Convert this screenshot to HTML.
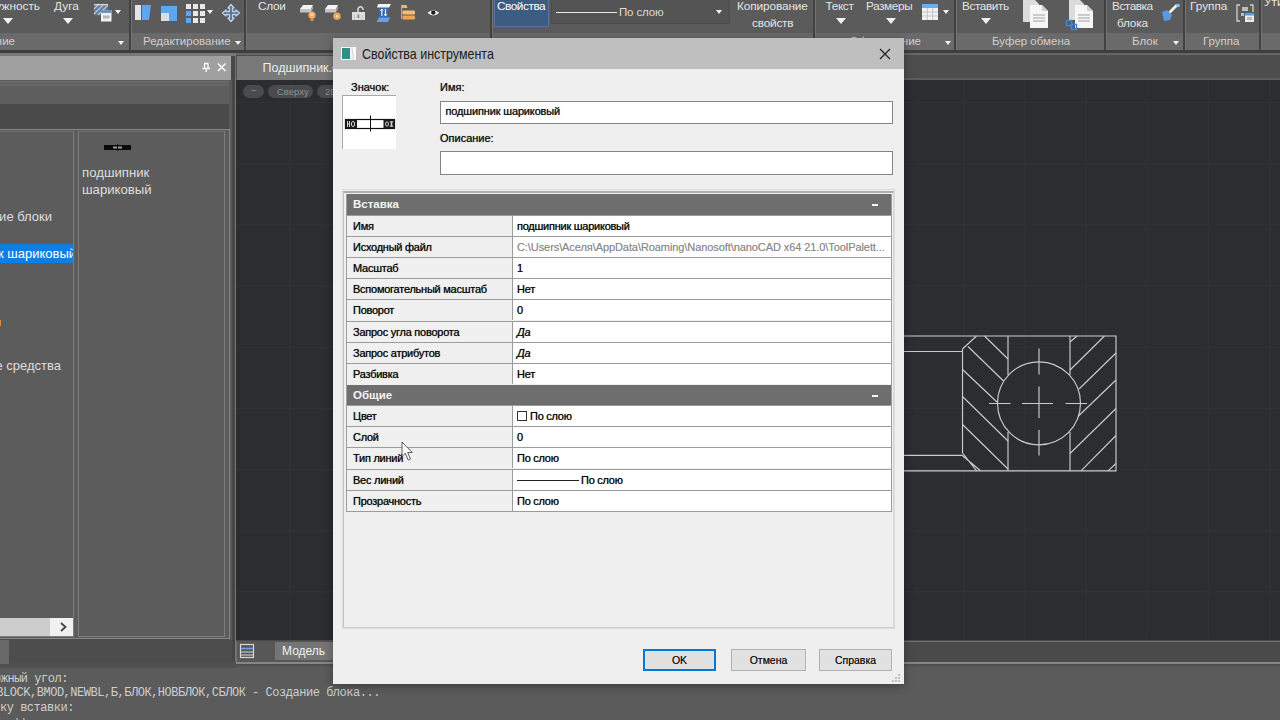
<!DOCTYPE html>
<html lang="ru">
<head>
<meta charset="utf-8">
<title>Свойства инструмента</title>
<style>
*{box-sizing:border-box;margin:0;padding:0}
html,body{width:1280px;height:720px;overflow:hidden;background:#4b4b4b;font-family:"Liberation Sans",sans-serif;}
#root{position:relative;width:1280px;height:720px;overflow:hidden;background:#4b4b4b}
.a{position:absolute}
.t{position:absolute;white-space:nowrap;line-height:1;}
/* ribbon */
#ribbon{left:0;top:0;width:1280px;height:50px;background:#5b5b5b}
#ribtitles{left:0;top:33px;width:1280px;height:17px;background:#6a6a6a}
.rt{font-size:11.800px;color:#e4e4e4;top:1px}
.rp{font-size:11.500px;color:#cfcfcf;top:36px}
.sep{position:absolute;top:0;width:3px;height:50px;background:#424242;border-right:1px solid #727272}
.tri{position:absolute;width:0;height:0;border-left:5px solid transparent;border-right:5px solid transparent;border-top:6px solid #f2f2f2}
.tris{position:absolute;width:0;height:0;border-left:3.5px solid transparent;border-right:3.5px solid transparent;border-top:4px solid #f2f2f2}
/* dialog */
#dlg{left:333px;top:38px;width:571px;height:646px;background:#efefef;box-shadow:0 2px 9px rgba(0,0,0,.32)}
#dlgtitle{left:0;top:0;width:570px;height:31px;background:#c1c1c1}
.dl{font-size:11px;color:#141414;text-shadow:0 0 .7px rgba(0,0,0,.75)}
.inp{position:absolute;background:#fff;border:1px solid #858585}
.gh{position:absolute;left:347px;width:544px;height:21px;background:#6e6e6e}
.gh span{position:absolute;left:6px;top:5px;font-size:11.5px;font-weight:bold;color:#f4f4f4;line-height:1}
.gr{position:absolute;left:347px;width:544px;height:21px;background:#fff;border-top:1px solid #9c9c9c}
.gr .k{position:absolute;left:0;top:0;width:166px;height:20px;background:#f0f0f0;border-right:1px solid #9c9c9c}
.gr .k span,.gr .v span{position:absolute;top:5px;font-size:11px;line-height:1;white-space:nowrap;color:#0c0c0c;letter-spacing:-.25px;text-shadow:0 0 .7px rgba(0,0,0,.75)}
.gr .k span{left:6px}
.gr .v{position:absolute;left:166px;top:0;width:378px;height:20px}
.gr .v span{left:4px}
.btn{position:absolute;height:22px;width:73px;background:#e1e1e1;border:1px solid #b2b2b2;font-size:10.500px;color:#111;text-shadow:0 0 .6px rgba(0,0,0,.6);text-align:center;line-height:20px}

.gh i{position:absolute;right:13px;top:10px;width:6px;height:2px;background:#f4f4f4}
.cb{position:absolute;left:4px;top:5px;width:10px;height:10px;border:1px solid #333;background:#fff}
.ln{position:absolute;left:4px;top:10px;width:62px;height:1px;background:#222}
</style>
</head>
<body>
<div id="root">

<!-- RIBBON -->
<div id="ribbon" class="a"></div>
<div id="ribtitles" class="a"></div>

<!-- ribbon separators -->
<div class="sep" style="left:129px"></div>
<div class="sep" style="left:244px"></div>
<div class="sep" style="left:490px"></div>
<div class="sep" style="left:813px"></div>
<div class="sep" style="left:954px"></div>
<div class="sep" style="left:1104px"></div>
<div class="sep" style="left:1183px"></div>
<div class="sep" style="left:1259px"></div>

<!-- panel 1: drawing -->
<div class="t rt" style="right:1240px">Окружность</div>
<div class="tri" style="left:3px;top:18px"></div>
<div class="t rt" style="left:54px">Дуга</div>
<div class="tri" style="left:63px;top:18px"></div>
<svg class="a" style="left:93px;top:2px" width="22" height="22" viewBox="0 0 22 22">
  <rect x="1" y="2" width="14" height="11" fill="#6f747c"/>
  <path d="M1 7 L6 2 M1 12 L11 2 M5 13 L15 3" stroke="#c9c9c9" stroke-width="1.300"/>
  <path d="M1 9.500 L8.500 2 M2.500 13 L13.500 2" stroke="#4f86cc" stroke-width="1.200"/>
  <rect x="1" y="2" width="14" height="1.200" fill="#d8d8d8"/>
  <rect x="8" y="8" width="10.500" height="11.500" fill="#f2f2f2"/>
  <rect x="8" y="8" width="10.500" height="3" fill="#6f94c4"/>
  <rect x="10" y="13.500" width="6.500" height="3" fill="#b4b4b4"/>
</svg>
<div class="tris" style="left:115px;top:10px"></div>
<div class="t rp" style="right:1265px">Черчение</div>
<div class="tris" style="left:118px;top:41px"></div>

<!-- panel 2: editing -->
<svg class="a" style="left:134px;top:3px" width="20" height="20" viewBox="0 0 20 20">
  <rect x="1" y="2" width="6" height="15" fill="#e4e4e4"/>
  <path d="M8 2 L17 2 L15 17 L8 17 Z" fill="#5ea6f2"/>
</svg>
<svg class="a" style="left:159px;top:3px" width="20" height="20" viewBox="0 0 20 20">
  <rect x="2" y="3" width="16" height="15" fill="#5ea6f2"/>
  <rect x="2" y="10" width="8" height="8" fill="#dcdcdc"/>
</svg>
<svg class="a" style="left:185px;top:3px" width="20" height="20" viewBox="0 0 20 20">
  <g fill="#e8e8e8"><rect x="1" y="1" width="5" height="5"/><rect x="8" y="1" width="5" height="5"/><rect x="15" y="1" width="5" height="5"/>
  <rect x="8" y="8" width="5" height="5"/><rect x="15" y="8" width="5" height="5"/>
  <rect x="8" y="15" width="5" height="5"/><rect x="15" y="15" width="5" height="5"/></g>
  <g fill="#5ea6f2"><rect x="1" y="8" width="5" height="5"/><rect x="1" y="15" width="5" height="5"/></g>
</svg>
<div class="tris" style="left:207px;top:10px"></div>
<svg class="a" style="left:221px;top:3px" width="20" height="20" viewBox="0 0 20 20">
  <path d="M10 1.500 L13 5 H11.500 V8.500 H15 V7 L18.500 10 L15 13 V11.500 H11.500 V15 H13 L10 18.500 L7 15 H8.500 V11.500 H5 V13 L1.500 10 L5 7 V8.500 H8.500 V5 H7 Z" fill="#5b6f88" stroke="#b8d2ee" stroke-width="1.300" stroke-linejoin="round"/>
</svg>
<div class="t rp" style="left:143px">Редактирование</div>
<div class="tris" style="left:235px;top:41px"></div>

<!-- panel 3: layers -->
<div class="t rt" style="left:258px;letter-spacing:-.3px">Слои</div>
<svg class="a" style="left:298px;top:0" width="150" height="26" viewBox="298 0 150 26">
  <!-- layer on -->
  <path d="M300 9 L303 5 H313 L311 9 Z" fill="#f4f4f4"/><rect x="300" y="9" width="11" height="3.500" fill="#c4c4c4"/><path d="M311 9 L313 5 V9 L311 12.500 Z" fill="#a0a0a0"/>
  <circle cx="312" cy="15" r="3.600" fill="#f3ad62"/><circle cx="312" cy="14.500" r="1.600" fill="#fbd9a8"/><rect x="310.600" y="17.800" width="2.800" height="3" fill="#e89a48"/>
  <!-- layer freeze -->
  <path d="M325 9 L328 5 H338 L336 9 Z" fill="#f4f4f4"/><rect x="325" y="9" width="11" height="3.500" fill="#c4c4c4"/><path d="M336 9 L338 5 V9 L336 12.500 Z" fill="#a0a0a0"/>
  <circle cx="337" cy="16.300" r="3.800" fill="#e9a158"/><circle cx="337" cy="16.300" r="1.500" fill="#f9d4a0"/>
  <!-- lock -->
  <path d="M358 12 V9 A2.600 3 0 0 1 363 9 V10" fill="none" stroke="#dcdcdc" stroke-width="1.500"/><rect x="352" y="12" width="13" height="8" fill="#dedede"/><rect x="357.500" y="14.500" width="1.800" height="3.500" fill="#8a8a8a"/><path d="M354.500 15 V20 M362 15 V20" stroke="#c2c2c2" stroke-width="1"/>
  <!-- layer move -->
  <rect x="379" y="7" width="9" height="11" fill="#3569b4"/><path d="M378 4 H391 L389 7.500 H377 Z" fill="#f2f2f2"/><path d="M379 17.500 H390 L388 22 H376.500 Z" fill="#5da3ee"/><path d="M381.800 9 V16 M385.500 9 V16" stroke="#eaeaea" stroke-width="1.200"/><path d="M380.500 11 L381.800 9 L383.100 11 M384.200 14 L385.500 16 L386.800 14" stroke="#eaeaea" fill="none" stroke-width="1"/>
  <!-- layer folder -->
  <path d="M401 5 H406.500 L407.500 8 H401 Z" fill="#f0b56a"/><rect x="402.500" y="10.500" width="12.500" height="4" rx="1" fill="#f4bd78"/><rect x="402.500" y="15.500" width="12.500" height="4" rx="1" fill="#eda557"/><rect x="401" y="5" width="1.200" height="14" fill="#e8a04e"/>
  <!-- eye -->
  <path d="M427.500 12.800 Q433.300 7.500 439.200 12.800 Q433.300 18 427.500 12.800 Z" fill="#f6f6f6"/><circle cx="433.300" cy="12.600" r="2.200" fill="#1e1e1e"/>
</svg>

<!-- panel 4: properties -->
<div class="a" style="left:494px;top:0;width:55px;height:27px;background:#3d5c82;border:1px solid #54759e;border-top:none"></div>
<div class="t rt" style="left:497px;color:#fff;letter-spacing:-.45px">Свойства</div>
<div class="a" style="left:551px;top:0;width:179px;height:24px;border:1px solid #4c4c4c;border-top:none;background:#545454"></div>
<div class="a" style="left:556px;top:12px;width:61px;height:1px;background:#e8e8e8"></div>
<div class="t" style="left:619px;top:7px;font-size:11.500px;letter-spacing:-.15px;color:#dcdcdc">По слою</div>
<div class="tris" style="left:716px;top:10px"></div>
<div class="t rt" style="left:737px;letter-spacing:-.1px">Копирование</div>
<div class="t rt" style="left:752px;top:17.500px;letter-spacing:-.2px">свойств</div>

<!-- panel 5: annotation -->
<div class="t rt" style="left:825.500px;letter-spacing:-.35px">Текст</div>
<div class="tri" style="left:836px;top:18px"></div>
<div class="t rt" style="left:866px;letter-spacing:-.4px">Размеры</div>
<div class="tri" style="left:886px;top:18px"></div>
<svg class="a" style="left:921px;top:3px" width="18" height="18" viewBox="0 0 18 18">
  <rect x="1" y="1" width="16" height="16" fill="#f2f2f2"/><rect x="1" y="1" width="16" height="4" fill="#6aaef0"/>
  <path d="M1 9 H17 M1 13 H17 M6.300 5 V17 M11.700 5 V17" stroke="#c4c4c4" stroke-width="1"/>
</svg>
<div class="tris" style="left:943px;top:10px"></div>
<div class="t rp" style="right:359px">Оформление</div>
<div class="tris" style="left:945px;top:41px"></div>

<!-- panel 6: clipboard -->
<div class="t rt" style="left:962px;letter-spacing:-.4px">Вставить</div>
<div class="tri" style="left:981px;top:18px"></div>
<svg class="a" style="left:1022px;top:0" width="28" height="30" viewBox="0 0 28 30">
  <path d="M1 0 H13 L17 4 V22 H1 Z" fill="#dcdcdc"/>
  <path d="M8 5 H20 L26 11 V28 H8 Z" fill="#f6f6f6"/><path d="M20 5 V11 H26 Z" fill="#cfcfcf"/>
  <path d="M11 15 H23 M11 18 H23 M11 21 H23" stroke="#bdbdbd" stroke-width="1.4"/>
</svg>
<svg class="a" style="left:1065px;top:0" width="30" height="32" viewBox="0 0 30 32">
  <path d="M4 0 H15 L19 4 V20 H4 Z" fill="#dcdcdc"/>
  <path d="M10 5 H22 L28 11 V28 H10 Z" fill="#f6f6f6"/><path d="M22 5 V11 H28 Z" fill="#cfcfcf"/>
  <path d="M13 15 H25 M13 18 H25 M13 21 H25" stroke="#bdbdbd" stroke-width="1.4"/>
  <rect x="1.500" y="20.500" width="5" height="5" fill="none" stroke="#3f86d8" stroke-width="1.5"/><rect x="6.500" y="24.500" width="5" height="5" fill="none" stroke="#3f86d8" stroke-width="1.5"/>
</svg>
<div class="t rp" style="left:992px">Буфер обмена</div>

<!-- panel 7: block -->
<div class="t rt" style="left:1112px;letter-spacing:-.45px">Вставка</div>
<div class="t rt" style="left:1117px;top:17.500px;letter-spacing:-.2px">блока</div>
<svg class="a" style="left:1160px;top:3px" width="22" height="20" viewBox="0 0 22 20">
  <path d="M8 11 L17 2" stroke="#f0f0f0" stroke-width="2.6"/>
  <path d="M2 9 L7 7 L12 12 L10 17 L4 18 Z" fill="#5a9ae0"/><circle cx="18" cy="2.500" r="1.800" fill="#8cc0f4"/>
</svg>
<div class="t rp" style="left:1132px">Блок</div>
<div class="tris" style="left:1173px;top:41px"></div>

<!-- panel 8: group -->
<div class="t rt" style="left:1190px">Группа</div>
<svg class="a" style="left:1236px;top:4px" width="20" height="20" viewBox="0 0 20 20">
  <path d="M4 1 H1 V17 H4 M14 1 H17 V8" fill="none" stroke="#d0d0d0" stroke-width="1.3"/>
  <rect x="6" y="3" width="6" height="4" fill="#bdbdbd"/><rect x="5" y="9" width="3" height="3" fill="#bdbdbd"/>
  <rect x="9" y="9" width="9" height="9" fill="#ececec"/><rect x="9" y="9" width="9" height="2.500" fill="#5a9ae0"/><rect x="11" y="13" width="5" height="3" fill="#b8b8b8"/>
</svg>
<div class="t rp" style="left:1203px">Группа</div>
<div class="t rt" style="left:1264px;top:-3px">Утилиты</div>

<!-- strip under ribbon -->
<div class="a" style="left:0;top:50px;width:1280px;height:2.500px;background:#3e3e3e"></div>
<div class="a" style="left:0;top:52.500px;width:1280px;height:3.500px;background:#787878"></div>

<!-- LEFT PALETTE -->
<div id="palette" class="a" style="left:0;top:56px;width:236px;height:606px;background:#4b4b4b">
  <div class="a" style="left:0;top:0;width:231px;height:24px;background:#a0a0a0"></div>
  <!-- pin + close -->
  <svg class="a" style="left:200px;top:4px" width="30" height="16" viewBox="0 0 30 16">
    <path d="M4 3.500 H8.500 M4.500 3.500 V8 M8 3.500 V8 M2.500 8.500 H10 M6.250 9 V12" stroke="#fff" stroke-width="1.300" fill="none"/>
    <path d="M18 3.500 L25.500 11 M25.500 3.500 L18 11" stroke="#fff" stroke-width="1.500"/>
  </svg>
  <div class="a" style="left:0;top:24px;width:229px;height:24px;background:#5d5d5d"></div>
  <div class="a" style="left:0;top:25px;width:229px;height:5px;background:#626262;border-top:1px solid #6c6c6c;border-bottom:1px solid #6a6a6a"></div>
  <div class="a" style="left:0;top:48px;width:229px;height:26px;background:#4b4b4b"></div>
  <div class="a" style="left:229px;top:24px;width:3px;height:582px;background:#595959"></div>
  <div class="a" style="left:232px;top:0;width:3px;height:606px;background:#474747"></div>
  <div class="a" style="left:235px;top:0;width:1px;height:606px;background:#747474"></div>
  <!-- frame -->
  <div class="a" style="left:-2px;top:73px;width:232px;height:510px;background:#5c5c5c;border:1px solid #868686"></div>
  <!-- tree panel -->
  <div class="a" style="left:-2px;top:75px;width:76px;height:506px;background:#5c5c5c;border:1px solid #7e7e7e;border-top-color:#6c6c6c;overflow:hidden">
    <div class="t" style="right:21px;top:78px;font-size:13px;color:#dedede">Динамические блоки</div>
    <div class="a" style="left:0;top:111.500px;width:76px;height:19px;background:#0d7fe4"></div>
    <div class="t" style="right:-3px;top:114.500px;font-size:13px;color:#fff">подшипник шариковый</div>
    <div class="a" style="left:0;top:188px;width:2px;height:6px;background:#d88a3a"></div>
    <div class="t" style="right:12px;top:227px;font-size:13px;color:#dedede">Вспомогательные средства</div>
    <!-- scrollbar -->
    <div class="a" style="left:0;top:486px;width:75px;height:18px;background:#f0f0f0"></div>
    <div class="a" style="left:0;top:486px;width:51px;height:18px;background:#cdcdcd"></div>
    <svg class="a" style="left:58px;top:489px" width="12" height="12" viewBox="0 0 12 12"><path d="M4 2 L8.500 6 L4 10" fill="none" stroke="#444" stroke-width="1.800"/></svg>
  </div>
  <!-- list panel -->
  <div class="a" style="left:78px;top:75px;width:147px;height:506px;background:#5c5c5c;border:1px solid #7e7e7e;border-top-color:#6c6c6c">
    <svg class="a" style="left:25px;top:12px" width="28" height="8" viewBox="0 0 28 8">
      <rect x="0" y="1" width="27" height="5" fill="#0a0a0a"/><rect x="9" y="2.500" width="9" height="2" fill="#9a9a9a"/><rect x="13" y="0" width="1" height="7" fill="#0a0a0a"/>
    </svg>
    <div class="t" style="left:3px;top:34px;font-size:13.200px;color:#dedede">подшипник</div>
    <div class="t" style="left:3px;top:51px;font-size:13.200px;color:#dedede">шариковый</div>
  </div>
  <div class="a" style="left:0;top:584px;width:232px;height:22px;background:#4d4d4d"></div>
  <div class="a" style="left:0;top:584px;width:9px;height:22px;background:#686868"></div>
</div>

<!-- DRAWING AREA -->
<div class="a" style="left:236px;top:53px;width:1044px;height:2px;background:#666"></div><div class="a" style="left:236px;top:54.500px;width:1044px;height:25.500px;background:#4d4d4d"></div>
<div class="a" style="left:236px;top:78px;width:1044px;height:2px;background:#5c5c5c"></div>
<div class="a" style="left:237px;top:56px;width:100px;height:24px;background:#797979"></div>
<div class="t" style="left:262.500px;top:61.500px;font-size:12.500px;color:#ededed">Подшипник.dwg</div>
<div id="draw" class="a" style="left:236px;top:80px;width:1044px;height:560px;background-color:#2b2d31;background-image:linear-gradient(to right,#303237 1px,transparent 1px),linear-gradient(to bottom,#303237 1px,transparent 1px);background-size:61.200px 61.200px;background-position:54px 22px;overflow:hidden">
  <div class="a" style="left:7px;top:5px;width:21px;height:13px;border-radius:7px;background:#494b4e"></div>
  <div class="a" style="left:32px;top:5px;width:45px;height:13px;border-radius:7px;background:#494b4e"></div>
  <div class="a" style="left:81px;top:5px;width:60px;height:13px;border-radius:7px;background:#494b4e"></div>
  <div class="t" style="left:15px;top:6px;font-size:10px;color:#8d8f92">−</div>
  <div class="t" style="left:41px;top:7px;font-size:9.500px;color:#8d8f92">Сверху</div>
  <div class="t" style="left:89px;top:7px;font-size:9.500px;color:#8d8f92">2D-каркас</div>
  <svg class="a" style="left:0;top:0" width="1044" height="560" viewBox="236 80 1044 560">
    <g stroke="#cbcbcb" stroke-width="1.150" fill="none">
      <path d="M880 336 H1116 V470.800 H880"/>
      <path d="M880 351.500 H962.500 M880 455.300 H962"/>
      <path d="M962.500 349 V453 M962.500 349 L976.500 336 M962.500 453 L976.700 470.800 M962 455.300 L980.500 470.800"/>
      <path d="M1008 336 V375 M1008 432 V470.800 M1070 336 V375 M1070 432 V470.800"/>
      <circle cx="1039" cy="403.300" r="41.500"/>
      <path d="M989 403.500 H1010.500 M1022 403.500 H1053 M1065.500 403.500 H1087 M1039 348.500 V374.500 M1039 386.500 V418 M1039 430 V455.500"/>
      <path d="M984.500 336 L1008 359 M968 346.500 L1003.500 381 M962.500 369.500 L997 402 M962.500 396.500 L1008 441 M962.500 424.500 L1008 469"/>
      <path d="M1070 342 L1077 336 M1070 370 L1104.500 336 M1079 389 L1116 353 M1078 416.500 L1116 380 M1070 453.500 L1116 408.500 M1081 470.800 L1116 435.500 M1108 470.800 L1116 463.500"/>
    </g>
  </svg>
</div>
<!-- model tabs -->
<div class="a" style="left:236px;top:639px;width:1044px;height:25px;background:#4a4a4a;border-top:1px solid #2d2d2f"></div><div class="a" style="left:236px;top:641px;width:1044px;height:1px;background:#707070"></div><div class="a" style="left:0;top:662px;width:236px;height:6px;background:#4f4f4f"></div><div class="a" style="left:0;top:662px;width:9px;height:2px;background:#686868"></div>
<div class="a" style="left:236px;top:662px;width:1044px;height:2px;background:#868686"></div><div class="a" style="left:236px;top:641px;width:100px;height:22px;background:#575757;border-left:1px solid #727272"></div>
<svg class="a" style="left:239px;top:643px" width="17" height="17" viewBox="0 0 17 17">
  <rect x="1.500" y="1.500" width="13" height="13" fill="none" stroke="#d8d8d8" stroke-width="1.200"/>
  <path d="M2 5.500 H14" stroke="#6aa8e8" stroke-width="1.600"/><path d="M2 9 H14 M2 12 H14" stroke="#d8d8d8" stroke-width="1.200"/>
</svg>
<div class="a" style="left:275px;top:642px;width:59px;height:18px;background:#757575"></div>
<div class="t" style="left:282px;top:645px;font-size:12px;color:#f0f0f0">Модель</div>

<!-- COMMAND LINE -->
<div id="cmd" class="a" style="left:0;top:662px;width:1280px;height:58px;background:#5b5b5b;overflow:hidden;font-family:'Liberation Mono','DejaVu Sans Mono',monospace;font-size:12px;letter-spacing:-.47px;color:#cecece">
  <div class="t" style="right:1212px;top:10.500px">Укажите противоположный угол:</div>
  <div class="t" style="right:900px;top:25px">BLOCK,BMOD,NEWBL,Б,БЛОК,НОВБЛОК,СБЛОК - Создание блока...</div>
  <div class="t" style="right:1206px;top:39.500px">Укажите точку вставки:</div>
  <div class="t" style="right:1206px;top:56px">Масштабный коэффициент:</div>
</div>

<div class="a" style="left:0;top:662px;width:236px;height:6px;background:#4f4f4f"></div><div class="a" style="left:0;top:662px;width:9px;height:2px;background:#686868"></div>
<div class="a" style="left:236px;top:662px;width:1044px;height:2px;background:#868686"></div>
<div class="a" style="left:236px;top:664px;width:1044px;height:4px;background:linear-gradient(#4c4c4c,#5b5b5b)"></div>
<!-- DIALOG -->
<div id="dlg" class="a"></div>
<div class="a" style="left:333px;top:38px;width:571px;height:31px;background:#bfbfbf"></div>
<svg class="a" style="left:340px;top:46px" width="18" height="16" viewBox="0 0 18 16">
  <rect x="1" y="1" width="15" height="13" fill="#f4f4f4"/><rect x="2" y="2" width="8" height="11" fill="#2f8f84"/><path d="M12 1 L16 1 L16 14 L13 14 Z" fill="#fafafa"/><path d="M12 1 L13.500 14" stroke="#c8c8c8" stroke-width=".8"/>
</svg>
<div class="t" style="left:362px;top:47px;font-size:14.500px;color:#202020;transform:scaleX(.86);transform-origin:0 0">Свойства инструмента</div>
<svg class="a" style="left:878px;top:47px" width="14" height="14" viewBox="0 0 14 14"><path d="M2 2 L12 12 M12 2 L2 12" stroke="#222" stroke-width="1.200"/></svg>

<div class="t dl" style="left:351px;top:82px">Значок:</div>
<div class="a" style="left:342px;top:95px;width:54px;height:54px;background:#fff;border-left:1px solid #a8a8a8;border-top:1px solid #a8a8a8"></div>
<svg class="a" style="left:344px;top:113px" width="54" height="20" viewBox="0 0 54 20">
  <rect x="1.500" y="6.500" width="49" height="9" fill="#fff" stroke="#111" stroke-width="1.200"/>
  <rect x="1.500" y="6.500" width="11.500" height="9" fill="#1c1c1c"/><rect x="39.500" y="6.500" width="11" height="9" fill="#1c1c1c"/>
  <path d="M3.500 8 V14 M5.500 8 V14 M3.500 11 H5.500" stroke="#e8e8e8" stroke-width=".9" fill="none"/><ellipse cx="9" cy="11" rx="1.600" ry="2.600" fill="none" stroke="#e8e8e8" stroke-width=".9"/>
  <ellipse cx="43" cy="11" rx="1.500" ry="2.200" fill="none" stroke="#e0e0e0" stroke-width=".9"/><path d="M46 8 L49 14 M49 8 L46 14 M47.500 8 V14" stroke="#e0e0e0" stroke-width=".8"/>
  <path d="M26.500 2.500 V18.500" stroke="#111" stroke-width="1"/>
</svg>
<div class="t dl" style="left:440px;top:82px">Имя:</div>
<div class="inp" style="left:440px;top:101px;width:453px;height:23px"></div>
<div class="t dl" style="left:445.500px;top:106px;letter-spacing:-.15px">подшипник шариковый</div>
<div class="t dl" style="left:440px;top:133px">Описание:</div>
<div class="inp" style="left:440px;top:151px;width:453px;height:24px"></div>

<div class="a" style="left:342px;top:189px;width:553px;height:440px;border:1px solid #dcdce0;background:#efefef"></div><div class="a" style="left:343px;top:191px;width:551px;height:437px;border-top:2px solid #adadad;border-left:1px solid #c4c4c4;border-right:1px solid #d8d8d8;border-bottom:1px solid #d0d0d0;background:#efefef"></div>
<div class="gh" style="top:194px"><span>Вставка</span><i></i></div>
<div class="gr" style="top:215px"><div class="k"><span>Имя</span></div><div class="v"><span style="">подшипник шариковый</span></div></div>
<div class="gr" style="top:236px"><div class="k"><span>Исходный файл</span></div><div class="v"><span style="color:#8c8c8c;letter-spacing:-.08px;text-shadow:0 0 .6px rgba(130,130,130,.6)">C:\Users\Аселя\AppData\Roaming\Nanosoft\nanoCAD x64 21.0\ToolPalett...</span></div></div>
<div class="gr" style="top:257px"><div class="k"><span>Масштаб</span></div><div class="v"><span style="">1</span></div></div>
<div class="gr" style="top:278px"><div class="k"><span>Вспомогательный масштаб</span></div><div class="v"><span style="">Нет</span></div></div>
<div class="gr" style="top:299px"><div class="k"><span>Поворот</span></div><div class="v"><span style="">0</span></div></div>
<div class="gr" style="top:321px"><div class="k"><span>Запрос угла поворота</span></div><div class="v"><span style="font-style:italic">Да</span></div></div>
<div class="gr" style="top:342px"><div class="k"><span>Запрос атрибутов</span></div><div class="v"><span style="font-style:italic">Да</span></div></div>
<div class="gr" style="top:363px"><div class="k"><span>Разбивка</span></div><div class="v"><span style="">Нет</span></div></div>
<div class="gh" style="top:385px"><span>Общие</span><i></i></div>
<div class="gr" style="top:405px"><div class="k"><span>Цвет</span></div><div class="v"><b class="cb"></b><span style="left:17px">По слою</span></div></div>
<div class="gr" style="top:426px"><div class="k"><span>Слой</span></div><div class="v"><span>0</span></div></div>
<div class="gr" style="top:447px"><div class="k"><span>Тип линий</span></div><div class="v"><span>По слою</span></div></div>
<div class="gr" style="top:469px"><div class="k"><span>Вес линий</span></div><div class="v"><b class="ln"></b><span style="left:68px">По слою</span></div></div>
<div class="gr" style="top:490px"><div class="k"><span>Прозрачность</span></div><div class="v"><span>По слою</span></div></div>
<div class="a" style="left:346px;top:194px;width:1px;height:318px;background:#9c9c9c"></div>
<div class="a" style="left:891px;top:194px;width:1px;height:318px;background:#9c9c9c"></div>
<div class="a" style="left:346px;top:511px;width:546px;height:1px;background:#9c9c9c"></div>

<div class="btn" style="left:643px;top:649px;border:2px solid #0078d7;line-height:18px">OK</div>
<div class="btn" style="left:731px;top:649px;width:75px">Отмена</div>
<div class="btn" style="left:819px;top:649px">Справка</div>
<svg class="a" style="left:891px;top:673px" width="10" height="10" viewBox="0 0 10 10"><g fill="#c0c0c0"><rect x="7" y="1" width="2" height="2"/><rect x="4" y="4" width="2" height="2"/><rect x="7" y="4" width="2" height="2"/><rect x="1" y="7" width="2" height="2"/><rect x="4" y="7" width="2" height="2"/><rect x="7" y="7" width="2" height="2"/></g></svg>
<!-- cursor -->
<svg class="a" style="left:401px;top:441px" width="14" height="21" viewBox="0 0 14 21"><path d="M1 1 V15.500 L4.300 12.300 L7.200 19 L9.500 18 L6.700 11.500 H11.300 Z" fill="#fafafa" stroke="#4a4a4a" stroke-width=".9"/></svg>

</div>
</body>
</html>
